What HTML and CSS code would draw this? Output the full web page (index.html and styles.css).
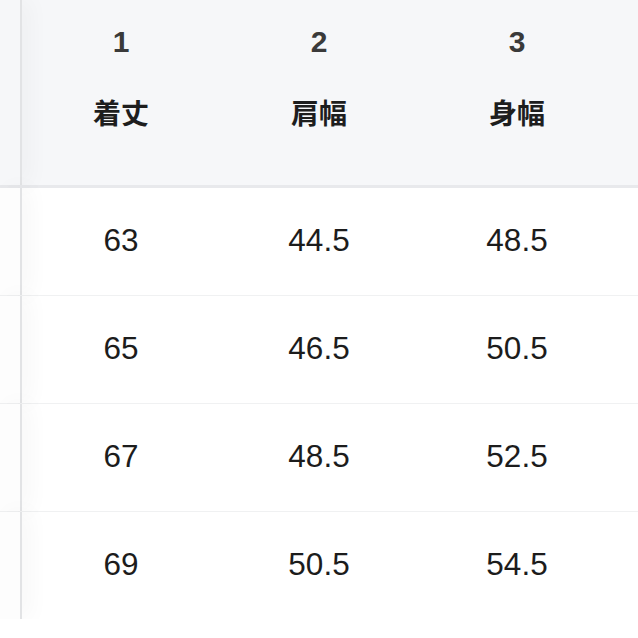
FILE: index.html
```html
<!DOCTYPE html>
<html lang="ja">
<head>
<meta charset="utf-8">
<link rel="stylesheet" href="styles.css">
</head>
<body>
<div class="table">
  <div class="row head">
    <div class="pin"></div>
    <div class="cell"><span class="num">1</span><span class="label">着丈</span></div>
    <div class="cell"><span class="num">2</span><span class="label">肩幅</span></div>
    <div class="cell"><span class="num">3</span><span class="label">身幅</span></div>
    <div class="cell cut"></div>
  </div>
  <div class="row body">
    <div class="pin"></div>
    <div class="cell">63</div><div class="cell">44.5</div><div class="cell">48.5</div><div class="cell cut"></div>
  </div>
  <div class="row body">
    <div class="pin"></div>
    <div class="cell">65</div><div class="cell">46.5</div><div class="cell">50.5</div><div class="cell cut"></div>
  </div>
  <div class="row body">
    <div class="pin"></div>
    <div class="cell">67</div><div class="cell">48.5</div><div class="cell">52.5</div><div class="cell cut"></div>
  </div>
  <div class="row body last">
    <div class="pin"></div>
    <div class="cell">69</div><div class="cell">50.5</div><div class="cell">54.5</div><div class="cell cut"></div>
  </div>
</div>
</body>
</html>
```

FILE: styles.css
```css
html, body {
  margin: 0;
  padding: 0;
  background: #ffffff;
}
.table {
  display: flex;
  flex-direction: column;
  width: 638px;
  overflow: hidden;
  font-family: "Liberation Sans", "Noto Sans CJK JP", sans-serif;
}
.row {
  display: flex;
}
.pin {
  flex: 0 0 22px;
  box-sizing: border-box;
  border-right: 2px solid #e2e3e5;
  position: relative;
  z-index: 1;
  box-shadow: 8px 0 22px rgba(0, 0, 0, 0.035);
}
.cell {
  flex: 0 0 198px;
  display: flex;
  flex-direction: column;
  align-items: center;
  justify-content: center;
}
.cell.cut {
  flex: 1 1 auto;
}
.head {
  height: 188px;
  box-sizing: border-box;
  background: #f6f7f9;
  border-bottom: 3px solid #e8e9ec;
}
.head .pin {
  background: #f6f7f9;
}
.head .cell {
  justify-content: flex-start;
}
.num {
  margin-top: 25px;
  font-size: 30px;
  font-weight: 600;
  line-height: 34px;
  color: #3a3a3a;
}
.label {
  margin-top: 36px;
  font-family: "Noto Sans CJK JP", sans-serif;
  font-size: 28px;
  font-weight: 700;
  line-height: 34px;
  color: #1e1e1e;
}
.body {
  height: 108px;
  box-sizing: border-box;
  border-bottom: 1px solid #f0f1f2;
}
.body.last {
  height: 107px;
  border-bottom: none;
}
.body .pin {
  background: #fdfdfd;
}
.body .cell {
  font-size: 31.5px;
  color: #1c1c1c;
  padding-bottom: 2px;
}
```
